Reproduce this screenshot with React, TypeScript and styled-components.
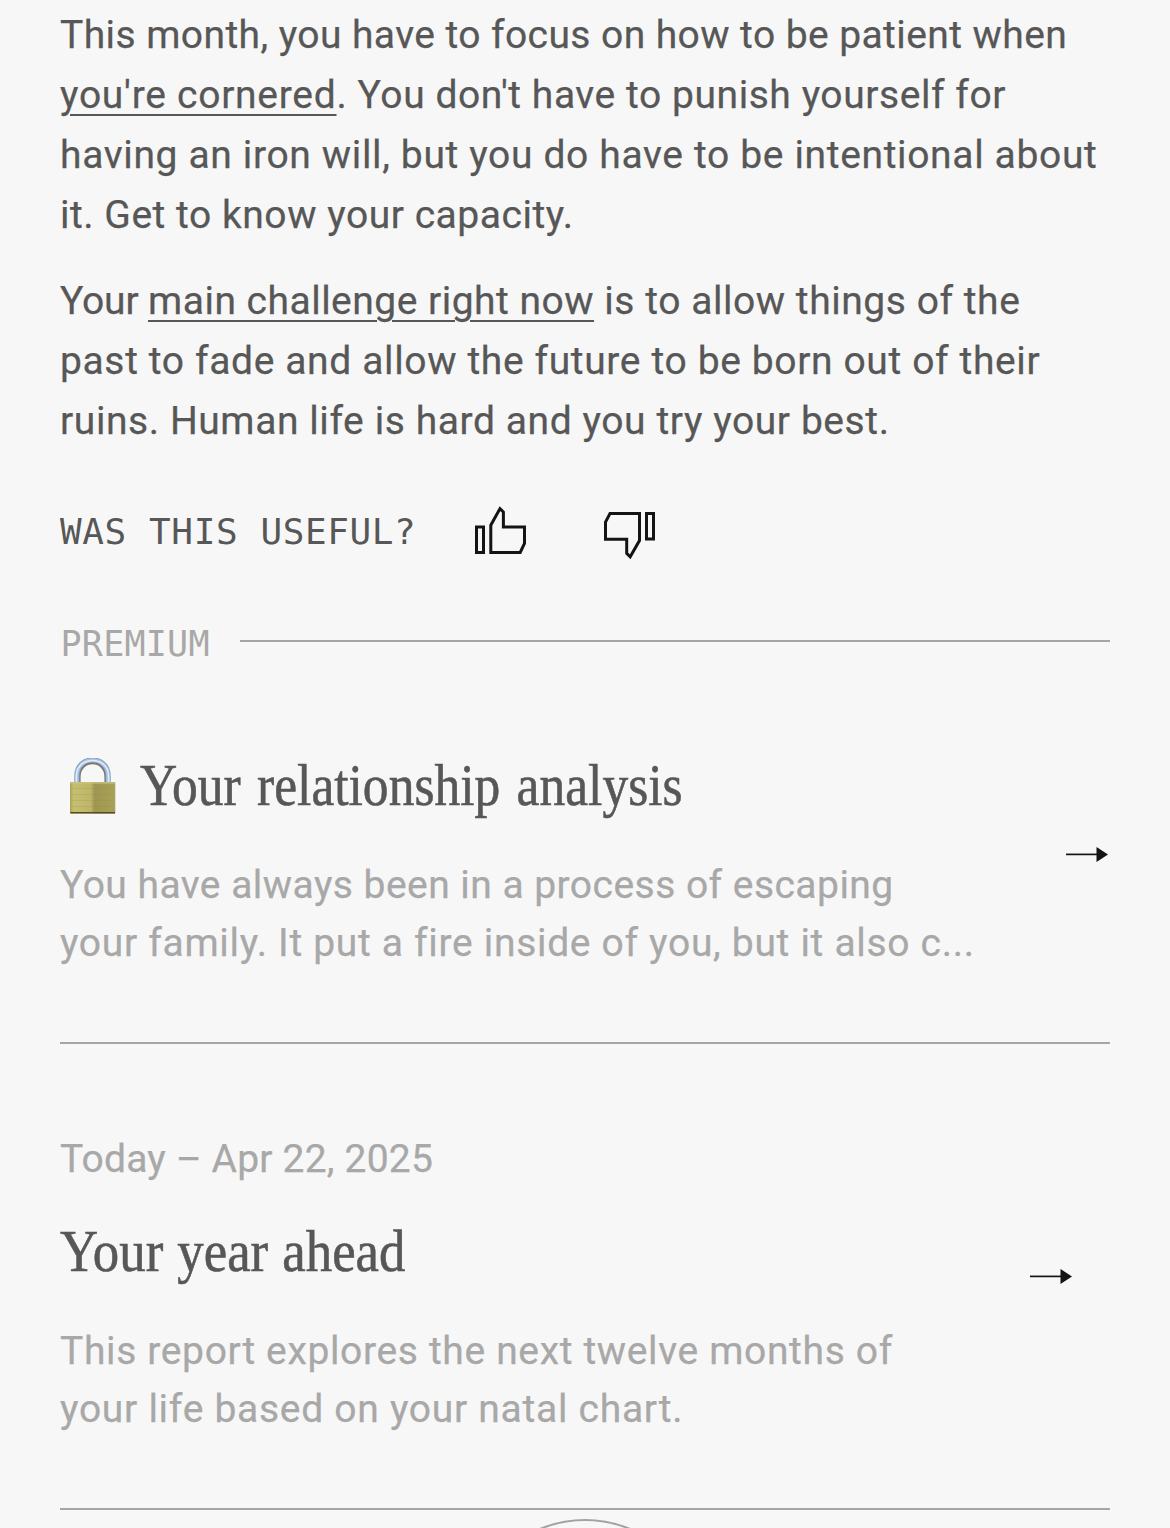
import React from "react";
import styled, { createGlobalStyle } from "styled-components";

const ink = "#575757";
const muted = "#a8a8a8";
const rule = "#a5a5a5";
const black = "#141414";
const page = "#f7f7f7";

const GlobalStyle = createGlobalStyle`
  *, *::before, *::after { box-sizing: border-box; }
  body { margin: 0; background: ${page}; }
`;

const Screen = styled.main`
  width: 1170px;
  height: 1528px;
  padding: 5px 60px 0;
  overflow: hidden;
  display: flex;
  flex-direction: column;
  background: ${page};
  color: ${ink};
  font-family: Roboto, "Liberation Sans", sans-serif;
  font-size: 39px;
  -webkit-text-stroke: 0.25px currentColor;
`;

const Paragraph = styled.p`
  margin: 0;
  line-height: 60px;
  & + & { margin-top: 26px; }
`;

const Line = styled.span`
  display: block;
  white-space: pre;
`;

const Run = styled.span<{ $track: number }>`
  letter-spacing: ${(p) => p.$track}px;
`;

const TextLink = styled.a<{ $track: number }>`
  color: inherit;
  letter-spacing: ${(p) => p.$track}px;
  text-decoration: underline;
  text-decoration-thickness: 2px;
  text-underline-offset: 6px;
`;

const Feedback = styled.div`
  display: flex;
  align-items: center;
  height: 60px;
  margin-top: 50px;
`;

const FeedbackLabel = styled.span`
  width: 413px;
  padding-top: 2px;
  font: 36px/60px "DejaVu Sans Mono", monospace;
  letter-spacing: 0.6px;
  -webkit-text-stroke: 0;
  white-space: nowrap;
`;

const IconButton = styled.button`
  display: block;
  width: 56px;
  height: 60px;
  padding: 0;
  border: 0;
  background: none;
  & + & { margin-left: 73px; }
  svg { display: block; }
`;

const SectionHead = styled.div`
  display: flex;
  align-items: flex-start;
  height: 63px;
  margin-top: 50px;
`;

const SectionLabel = styled.span`
  width: 180px;
  padding: 3px 0 0 0.5px;
  color: ${muted};
  font: 35px/60px "DejaVu Sans Mono", monospace;
  letter-spacing: 0.25px;
  -webkit-text-stroke: 0;
`;

const SectionRule = styled.span`
  flex: 1;
  height: 2px;
  margin-top: 29px;
  background: ${rule};
`;

const Card = styled.section<{ $top: number }>`
  display: flex;
  align-items: center;
  justify-content: space-between;
  padding: ${(p) => p.$top}px 0 70px;
  border-bottom: 2px solid ${rule};
`;

const CardDate = styled.div`
  margin-bottom: 28px;
  color: ${muted};
  line-height: 58px;
`;

const TitleRow = styled.div`
  display: flex;
  height: 68px;
`;

const Title = styled.h2<{ $squeeze: number; $gap: number }>`
  margin: 0;
  font: 400 59px/70px "Liberation Serif", serif;
  word-spacing: ${(p) => p.$gap}px;
  white-space: nowrap;
  transform: scaleX(${(p) => p.$squeeze});
  transform-origin: left center;
  -webkit-text-stroke: 0.6px ${ink};
`;

const LockBox = styled.span`
  width: 80px;
  padding: 8px 0 0 10px;
  flex: none;
  svg { display: block; }
`;

const Summary = styled.p`
  margin: 38px 0 0;
  color: ${muted};
  line-height: 58px;
`;

const ArrowBox = styled.span<{ $right: number; $lift: number }>`
  padding: 0 ${(p) => p.$right}px ${(p) => p.$lift}px 0;
  svg { display: block; }
`;

const OrbitClip = styled.div`
  height: 18px;
  overflow: hidden;
`;

const Orbit = styled.div`
  width: 236px;
  height: 236px;
  margin: 9px auto 0;
  border: 2px solid #a2a2a2;
  border-radius: 50%;
`;

const ThumbUp = () => (
  <svg width="56" height="60" viewBox="473 501 56 60" fill="none" stroke={black} strokeWidth="3">
    <rect x="476.5" y="527" width="7" height="25.5" />
    <path d="M490.8 552.5V525.2L500 508.6L503.4 512V527H524.5V543.5L520.2 552.5Z" />
  </svg>
);

const ThumbDown = () => (
  <svg width="56" height="60" viewBox="602 501 56 60" fill="none" stroke={black} strokeWidth="3">
    <rect x="646.5" y="513.5" width="7" height="25.5" />
    <path d="M639.5 513.5V540.5L630.2 556.8L626.7 553.3V539.2H605.5V522L610 513.5Z" />
  </svg>
);

const Arrow = () => (
  <svg width="42" height="16" viewBox="0 0 42 16">
    <path d="M0 7.4H32" stroke={black} strokeWidth="1.7" />
    <path d="M30.5 0L42 7.4L30.5 15Z" fill={black} />
  </svg>
);

const Lock = () => (
  <svg width="46" height="57" viewBox="0 0 46 57">
    <defs>
      <linearGradient id="brass" x1="0" x2="1" y1="0" y2="0">
        <stop offset="0" stopColor="#aaa254" />
        <stop offset="0.08" stopColor="#c6be70" />
        <stop offset="0.46" stopColor="#bdb567" />
        <stop offset="0.54" stopColor="#9e9651" />
        <stop offset="1" stopColor="#aaa158" />
      </linearGradient>
    </defs>
    <path d="M7.8 26V19C7.8 -1.6 37.2 -1.6 37.2 19V26" fill="none" stroke="#7d786c" strokeWidth="5.6" />
    <path d="M6.9 26V18C6.9 -3.4 38.1 -3.4 38.1 18V26" fill="none" stroke="#8499b3" strokeWidth="5.2" />
    <path d="M6.9 25V18C6.9 -3.2 38.1 -3.2 38.1 18V25" fill="none" stroke="#a3c2ea" strokeWidth="3.8" />
    <path d="M6.4 25V18C6.4 -2.6 38.6 -2.6 38.6 18V25" fill="none" stroke="#dfebf8" strokeWidth="1.5" />
    <rect x="0" y="24" width="45.3" height="31.5" rx="0.7" fill="url(#brass)" />
    <path d="M0.5 24.8H44.8" stroke="#cbc383" strokeWidth="1.2" />
    <path d="M1 30.5H44M1 36.5H44M1 42.5H44M1 48.5H44" stroke="#938b43" strokeOpacity="0.2" strokeWidth="1" />
    <path d="M0.3 54.7H45" stroke="#574c1f" strokeWidth="1.6" />
  </svg>
);

export default function App() {
  return (
    <>
      <GlobalStyle />
      <Screen>
        <Paragraph>
          <Line><Run $track={0.42}>This month, you have to focus on how to be patient when</Run></Line>
          <Line>
            <TextLink $track={0.73}>you're cornered</TextLink>
            <Run $track={0.56}>. You don't have to punish yourself for</Run>
          </Line>
          <Line><Run $track={0.65}>having an iron will, but you do have to be intentional about</Run></Line>
          <Line><Run $track={0.53}>it. Get to know your capacity.</Run></Line>
        </Paragraph>
        <Paragraph>
          <Line>
            <Run $track={-0.16}>{"Your "}</Run>
            <TextLink $track={0.49}>main challenge right now</TextLink>
            <Run $track={0.55}>{" is to allow things of the"}</Run>
          </Line>
          <Line><Run $track={0.63}>past to fade and allow the future to be born out of their</Run></Line>
          <Line><Run $track={0.58}>ruins. Human life is hard and you try your best.</Run></Line>
        </Paragraph>

        <Feedback>
          <FeedbackLabel>WAS THIS USEFUL?</FeedbackLabel>
          <IconButton aria-label="Useful"><ThumbUp /></IconButton>
          <IconButton aria-label="Not useful"><ThumbDown /></IconButton>
        </Feedback>

        <SectionHead>
          <SectionLabel>PREMIUM</SectionLabel>
          <SectionRule />
        </SectionHead>

        <Card $top={76}>
          <div>
            <TitleRow>
              <LockBox><Lock /></LockBox>
              <Title $squeeze={0.873} $gap={4}>Your relationship analysis</Title>
            </TitleRow>
            <Summary>
              <Line><Run $track={0.46}>You have always been in a process of escaping</Run></Line>
              <Line><Run $track={0.69}>your family. It put a fire inside of you, but it also c...</Run></Line>
            </Summary>
          </div>
          <ArrowBox $right={2} $lift={13}><Arrow /></ArrowBox>
        </Card>

        <Card $top={86}>
          <div>
            <CardDate><Run $track={0.2}>Today – Apr 22, 2025</Run></CardDate>
            <TitleRow>
              <Title $squeeze={0.895} $gap={1}>Your year ahead</Title>
            </TitleRow>
            <Summary>
              <Line><Run $track={0.65}>This report explores the next twelve months of</Run></Line>
              <Line><Run $track={0.72}>your life based on your natal chart.</Run></Line>
            </Summary>
          </div>
          <ArrowBox $right={38} $lift={15}><Arrow /></ArrowBox>
        </Card>

        <OrbitClip><Orbit /></OrbitClip>
      </Screen>
    </>
  );
}
